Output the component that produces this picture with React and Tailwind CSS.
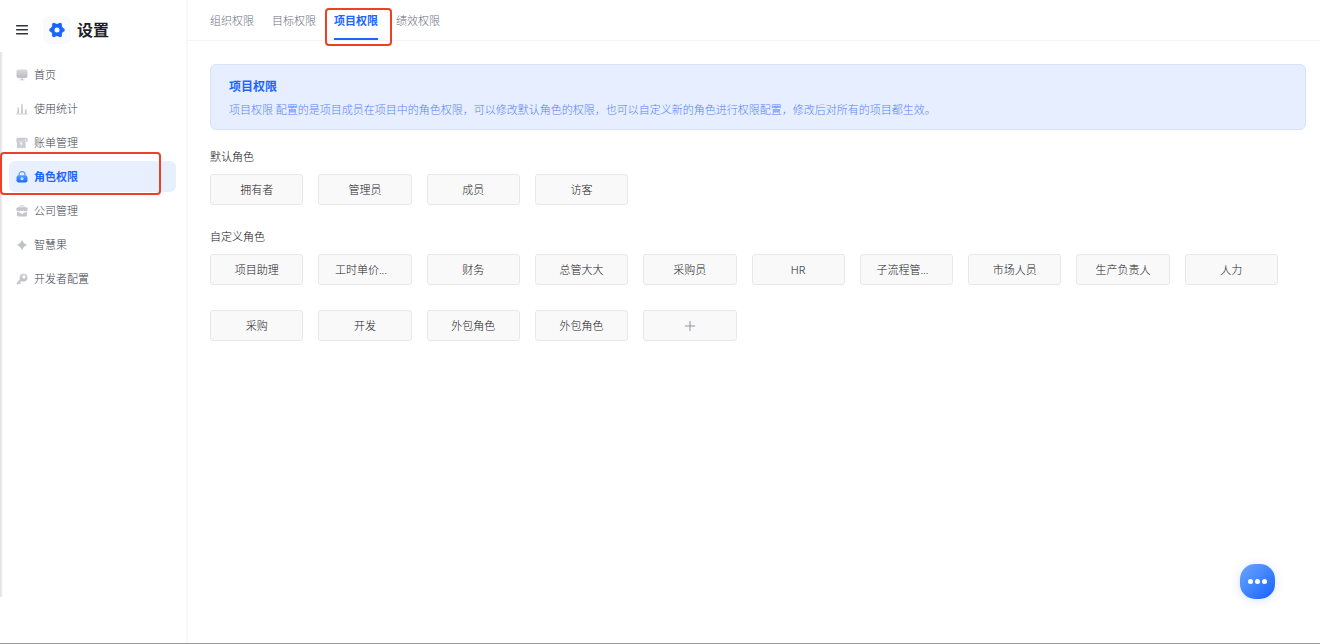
import React, { useState } from 'react'
import { Plus } from 'lucide-react'

const MenuIcon = () => (
  <svg viewBox="0 0 12 12" className="w-3 h-3" fill="currentColor">
    <rect x="0" y="1" width="12" height="1.400" rx=".4" />
    <rect x="0" y="5" width="12" height="1.400" rx=".4" />
    <rect x="0" y="9" width="12" height="1.400" rx=".4" />
  </svg>
)

const HomeIcon = () => (
  <svg viewBox="0 0 12 12" className="w-3 h-3" fill="url(#navFill)">
    <rect x="0.5" y="0.5" width="11" height="8.5" rx="2" />
    <path d="M5.2 9h1.6v1.500h1.800v.7H3.400v-.7h1.800z" />
  </svg>
)

const StatsIcon = () => (
  <svg viewBox="0 0 12 12" className="w-3 h-3" fill="url(#navFill)">
    <rect x="1.4" y="4.4" width="1.7" height="6.2" />
    <rect x="5.1" y="0.8" width="1.7" height="9.8" />
    <rect x="8.9" y="6" width="1.7" height="4.6" />
    <rect x="0.4" y="10.4" width="11.2" height="1" />
  </svg>
)

const BillIcon = () => (
  <svg viewBox="0 0 12 12" className="w-3 h-3">
    <path fill="#c9ccd1" d="M1.600.7H10c1 0 1.700.7 1.700 1.700v2.400H9.600v6.700L7.900 10.400l-1.700 1.100-1.700-1.100-1.700 1.100L.9 10.600V4.800H.4V2.100C.4 1.300.9.7 1.600.7z" />
    <path stroke="#fff" strokeWidth=".7" fill="none" d="M3.200 3.600l2 2.300 2-2.300M5.200 5.900v2.700M3.600 6.800h3.200M9.400 1.800v3" />
  </svg>
)

const RoleIcon = () => (
  <svg viewBox="0 0 12 12" className="w-3 h-3">
    <path fill="none" stroke="#5b9bff" strokeWidth="1.2" d="M3 5V3.700a3 3 0 0 1 6 0V5" />
    <rect x=".5" y="4.300" width="11" height="7.200" rx="2.200" fill="url(#activeFill)" />
    <circle cx="6" cy="7.800" r="1.500" fill="#b9f3ff" />
  </svg>
)

const CompanyIcon = () => (
  <svg viewBox="0 0 12 12" className="w-3 h-3">
    <path fill="none" stroke="#c3c6cb" d="M4 2.800V1.500c0-.4.300-.7.700-.7h2.600c.4 0 .7.300.7.700v1.300" />
    <rect x=".4" y="2.300" width="11.200" height="4" rx="1.500" fill="#c3c6cb" />
    <path fill="#c3c6cb" d="M1 6.900l3.300.8c.4 1.300 3 1.300 3.400 0L11 6.900v3c0 .9-.6 1.500-1.500 1.500h-7c-.9 0-1.500-.6-1.500-1.500z" />
    <path fill="none" stroke="#fff" strokeWidth=".8" d="M4.200 5.600c.6 1 3 1 3.600 0" />
  </svg>
)

const SparkIcon = () => (
  <svg viewBox="0 0 12 12" className="w-3 h-3" fill="#bec1c6">
    <path d="M6 .6c.8 2.900 2.500 4.600 5.400 5.400C8.500 6.800 6.800 8.500 6 11.400 5.200 8.500 3.500 6.800.6 6 3.500 5.200 5.200 3.500 6 .6z" />
  </svg>
)

const KeyIcon = () => (
  <svg viewBox="0 0 12 12" className="w-3 h-3">
    <path stroke="#c3c6cb" strokeWidth="1.900" d="M5.200 6.800L.9 11M2.600 9.200l1.700 1.700" fill="none" />
    <circle cx="7.500" cy="4.400" r="4" fill="url(#navFill)" />
    <circle cx="8" cy="3.900" r="1.500" fill="#fff" />
  </svg>
)

const GearIcon = () => (
  <svg viewBox="0 0 16 16" className="w-4 h-4">
    <g fill="#1b66ff">
      <circle cx="8" cy="8" r="6.200" />
      <circle cx="2.200" cy="8" r="2" />
      <circle cx="13.800" cy="8" r="2" />
      <circle cx="5" cy="2.800" r="2" />
      <circle cx="11" cy="2.800" r="2" />
      <circle cx="5" cy="13.200" r="2" />
      <circle cx="11" cy="13.200" r="2" />
    </g>
    <circle cx="8" cy="8" r="2.500" fill="#f8fafc" />
  </svg>
)

const navItems = [
  { label: '首页', icon: HomeIcon },
  { label: '使用统计', icon: StatsIcon },
  { label: '账单管理', icon: BillIcon },
  { label: '角色权限', icon: RoleIcon },
  { label: '公司管理', icon: CompanyIcon },
  { label: '智慧果', icon: SparkIcon },
  { label: '开发者配置', icon: KeyIcon },
]

const tabs = ['组织权限', '目标权限', '项目权限', '绩效权限']

const defaultRoles = ['拥有者', '管理员', '成员', '访客']

const customRoles = [
  '项目助理', '工时单价...', '财务', '总管大大', '采购员', 'HR', '子流程管...',
  '市场人员', '生产负责人', '人力', '采购', '开发', '外包角色', '外包角色',
]

const roleButton = 'h-[31px] flex items-center justify-center rounded-[3px] border border-[#e8e8e9] bg-[#f9f9f9] text-[#17181c] pt-px'

const RoleGrid = ({ roles, children }) => (
  <div className="grid grid-cols-10 gap-x-[15px] gap-y-[25px] mr-7">
    {roles.map((role, i) => (
      <button key={i} type="button" className={roleButton}>
        {/* Shortened names fill the label box from the left */}
        <span className={role.endsWith('...') ? 'w-[60px] text-left' : ''}>{role}</span>
      </button>
    ))}
    {children}
  </div>
)

const Sidebar = () => {
  const [current, setCurrent] = useState('角色权限')

  return (
    <aside className="relative w-[188px] shrink-0 border-r-2 border-[#f8f8f9]">
      <div className="absolute left-0 top-[52px] bottom-[46px] w-[3px] bg-linear-to-r from-[#dcdcdc] to-white"></div>

      <div className="flex items-center h-[59px] pl-4">
        <button type="button" aria-label="菜单" className="text-[#30333a]">
          <MenuIcon />
        </button>
        <span className="ml-[15px] w-7 h-7 rounded-md bg-[#f8fafc] flex items-center justify-center">
          <GearIcon />
        </span>
        <h1 className="ml-1.5 text-[16px] leading-6 font-bold text-[#1d2029]">设置</h1>
      </div>

      <nav>
        <ul className="flex flex-col gap-[3px] pl-[9px] pr-2.5">
          {navItems.map(({ label, icon: Icon }) => (
            <li key={label} className="relative">
              <a
                href="#"
                onClick={() => setCurrent(label)}
                className={`flex items-center gap-1.5 h-[31px] pl-[7px] rounded-md ${
                  current === label ? 'bg-[#e8efff] text-[#1b66ff] font-bold' : 'text-[#3d424c]'
                }`}
              >
                <Icon />
                {label}
              </a>
              {label === '角色权限' && (
                <span className="absolute -left-[9px] right-[15px] -top-[9px] -bottom-[3px] border-2 border-[#eb4127] rounded-[4px] pointer-events-none"></span>
              )}
            </li>
          ))}
        </ul>
      </nav>
    </aside>
  )
}

const App = () => {
  const [tab, setTab] = useState('项目权限')

  return (
    <div className="min-h-screen flex bg-white border-b border-[#999] text-[11px] leading-4 font-light font-['Noto_Sans','Noto_Sans_CJK_SC',sans-serif]">
      {/* Shared gradients for the nav icons */}
      <svg className="absolute w-0 h-0" aria-hidden="true">
        <defs>
          <linearGradient id="navFill" x1="0" y1="0" x2="0" y2="1">
            <stop offset="0" stopColor="#d6d8dc" />
            <stop offset="1" stopColor="#b9bdc3" />
          </linearGradient>
          <linearGradient id="activeFill" x1="0" y1="0" x2="0" y2="1">
            <stop offset="0" stopColor="#5b9bff" />
            <stop offset="1" stopColor="#1b66ff" />
          </linearGradient>
        </defs>
      </svg>

      <Sidebar />

      <main className="flex-1 min-w-0">
        {/* Tabs */}
        <div className="flex gap-[18px] h-[41px] pl-[22px] border-b border-[#f3f3f4]">
          {tabs.map(t => (
            <div key={t} className="relative flex">
              <button
                type="button"
                onClick={() => setTab(t)}
                className={`pt-1 border-b-2 ${tab === t ? 'border-[#1b66ff] text-[#1b66ff] font-bold' : 'border-transparent text-[#686e7a]'}`}
              >
                {t}
              </button>
              {t === '项目权限' && (
                <span className="absolute -left-[9px] -right-3.5 top-2 -bottom-1.5 border-2 border-[#eb4127] rounded-[4px] pointer-events-none"></span>
              )}
            </div>
          ))}
        </div>

        <div className="pl-[22px] pr-3.5 pt-[23px]">
          {/* Notice */}
          <section className="rounded-md border border-[#d5e3fd] bg-[#e7eeff] px-[18px] pt-3 pb-[11px]">
            <h2 className="text-[12px] leading-5 font-bold text-[#1b66ff]">项目权限</h2>
            <p className="mt-[5px] text-[#5583f8]">
              项目权限 配置的是项目成员在项目中的角色权限，可以修改默认角色的权限，也可以自定义新的角色进行权限配置，修改后对所有的项目都生效。
            </p>
          </section>

          <h3 className="mt-[19px] mb-[9px] text-[#0f1013] font-light">默认角色</h3>
          <RoleGrid roles={defaultRoles} />

          <h3 className="mt-6 mb-[9px] text-[#0f1013] font-light">自定义角色</h3>
          <RoleGrid roles={customRoles}>
            <button type="button" aria-label="添加角色" className={roleButton}>
              <Plus size={16} strokeWidth={1.5} className="text-[#8e949e]" />
            </button>
          </RoleGrid>
        </div>
      </main>

      {/* Floating help */}
      <button
        type="button"
        aria-label="更多"
        className="fixed right-[45px] bottom-[45px] w-[35px] h-[35px] rounded-[15px] bg-linear-to-br from-[#6ba4ff] to-[#1260ff] shadow-[0_1px_10px_rgba(27,102,255,0.18)] flex items-center justify-center gap-0.5"
      >
        <span className="w-[5px] h-[5px] rounded-full bg-white"></span>
        <span className="w-[5px] h-[5px] rounded-full bg-white"></span>
        <span className="w-[5px] h-[5px] rounded-full bg-white"></span>
      </button>
    </div>
  )
}

export default App
